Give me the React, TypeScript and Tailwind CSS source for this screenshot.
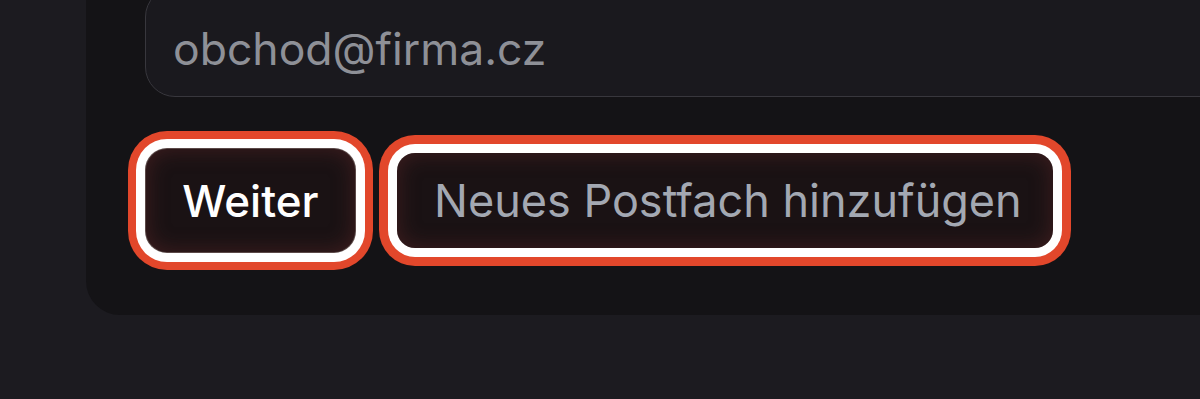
import React from 'react';

export default function App() {
  return (
    <div className="h-[399px] w-full overflow-hidden bg-[#1c1b20] pl-[86px] font-['Inter','Noto_Sans',sans-serif]">
      <div className="-mt-[60px] w-[1300px] rounded-[34px] bg-[#141316] pl-[59px] pt-[47px] pb-[62px]">
        {/* email field */}
        <div className="flex h-[110px] items-center rounded-[30px] border-[1.5px] border-[#38373d] bg-[#1a191e] pl-[27px] pt-[14px]">
          <span className="text-[44.5px] leading-none text-[#8e9097]">obchod@firma.cz</span>
        </div>

        {/* actions */}
        <div className="mt-[51px] flex items-center gap-[41px]">
          <button className="flex h-[105px] w-[211px] items-center justify-center rounded-[22px] border border-[#f2c9c4]/30 bg-[#1a1214] text-[44px] font-medium leading-none text-white shadow-[inset_0_0_22px_rgba(110,45,45,0.45),0_0_0_9px_#ffffff,0_0_0_17px_#e2472b]">
            Weiter
          </button>
          <button className="flex h-[95px] w-[656px] items-center rounded-[18px] bg-[#1a1214] pl-[37px] text-[45px] leading-none text-[#a3a8b2] shadow-[inset_0_0_22px_rgba(110,45,45,0.45),0_0_0_9px_#ffffff,0_0_0_18px_#e2472b]">
            Neues Postfach hinzufügen
          </button>
        </div>
      </div>
    </div>
  );
}
